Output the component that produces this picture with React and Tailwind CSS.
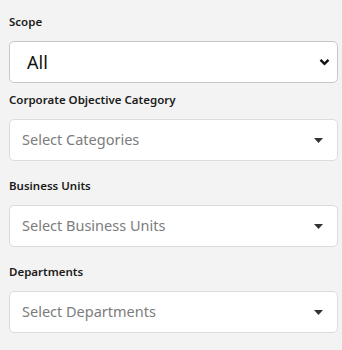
import React from "react";

// small caret used by the multi-select fields
function Caret() {
  return (
    <svg width="9" height="5" viewBox="0 0 9 5" className="shrink-0">
      <path d="M0 0 L9 0 L4.5 5 Z" fill="#333" />
    </svg>
  );
}

function Chevron() {
  return (
    <svg width="11" height="8" viewBox="0 0 11 8" className="shrink-0">
      <path d="M1.5 1.8 L5.5 5.8 L9.5 1.8" fill="none" stroke="#111" strokeWidth="2.4" />
    </svg>
  );
}

function Field({ label, placeholder }) {
  return (
    <div className="mt-[17px]">
      <div className="text-[11.5px] leading-4 font-semibold text-[#1b1b1b]">{label}</div>
      <div className="mt-[11px] h-[42px] bg-white border border-[#dcdcdc] rounded-[5px] flex items-center justify-between pl-[12px] pr-[14px]">
        <span className="text-[14.5px] text-[#7c7c7c]">{placeholder}</span>
        <Caret />
      </div>
    </div>
  );
}

export default function App() {
  return (
    <main
      className="min-h-screen w-[342px] bg-[#f3f3f3] pl-[9px] pr-[4px] pt-[14px]"
      style={{ fontFamily: '"Noto Sans", "Open Sans", sans-serif' }}
    >
      <div>
        <div className="text-[11.5px] leading-4 font-semibold text-[#1b1b1b]">Scope</div>
        <div className="mt-[11px] h-[42px] bg-white border border-[#c8c8c8] rounded-[5px] flex items-center justify-between pl-[17px] pr-[7px]">
          <span className="text-[18px] text-[#111]">All</span>
          <Chevron />
        </div>
      </div>
      <div className="mt-[9px]">
        <div className="text-[11.5px] leading-4 font-semibold text-[#1b1b1b]">Corporate Objective Category</div>
        <div className="mt-[11px] h-[42px] bg-white border border-[#dcdcdc] rounded-[5px] flex items-center justify-between pl-[12px] pr-[14px]">
          <span className="text-[14.5px] text-[#7c7c7c]">Select Categories</span>
          <Caret />
        </div>
      </div>
      <Field label="Business Units" placeholder="Select Business Units" />
      <Field label="Departments" placeholder="Select Departments" />
    </main>
  );
}
